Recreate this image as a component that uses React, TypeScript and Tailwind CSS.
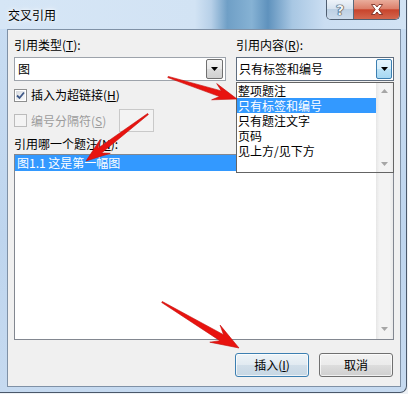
import React from "react";

function arrowPts(x1: number, y1: number, x2: number, y2: number, headLen: number, headW: number, shaftW: number) {
  const dx = x2 - x1, dy = y2 - y1;
  const L = Math.hypot(dx, dy);
  const ux = dx / L, uy = dy / L;
  const nx = -uy, ny = ux;
  const ix = x2 - ux * headLen * 0.72, iy = y2 - uy * headLen * 0.72;
  const bx = x2 - ux * headLen, by = y2 - uy * headLen;
  const pts = [
    [x1 + nx * 0.6, y1 + ny * 0.6],
    [ix + nx * shaftW / 2, iy + ny * shaftW / 2],
    [bx + nx * headW / 2, by + ny * headW / 2],
    [x2, y2],
    [bx - nx * headW / 2, by - ny * headW / 2],
    [ix - nx * shaftW / 2, iy - ny * shaftW / 2],
    [x1 - nx * 0.6, y1 - ny * 0.6],
  ];
  return pts.map((p) => p.map((v) => v.toFixed(1)).join(",")).join(" ");
}

function Tri({ color = "#000" }: { color?: string }) {
  return (
    <svg width="7" height="4" viewBox="0 0 7 4">
      <path d="M0 0 L7 0 L3.5 4 Z" fill={color} />
    </svg>
  );
}

function TriUp({ color = "#a6a6a6" }: { color?: string }) {
  return (
    <svg width="7" height="4" viewBox="0 0 7 4">
      <path d="M0 4 L7 4 L3.5 0 Z" fill={color} />
    </svg>
  );
}

export default function App() {
  return (
    <div className="relative w-[408px] h-[394px] overflow-hidden bg-[#eef2f6] font-['Noto_Sans_CJK_SC','Noto_Sans',sans-serif] text-[12px] leading-[16px] text-black">
      <div className="w-[407px] h-[393px] flex flex-col border-r border-b border-[#4a586a] rounded-br-[7px] bg-[linear-gradient(180deg,#c9ddf2_0%,#bed5ee_60%,#c6daf0_100%)]">
        {/* Title bar */}
        <div className="h-[29px] flex items-start bg-[linear-gradient(90deg,#d6e6f6_0%,#d2e3f4_48%,#b7d0e8_52%,#6f9fc6_56%,#86b2d4_62%,#5f92bd_66%,#a8c7e3_72%,#cbdef2_80%,#d2e3f4_100%)]">
          <div className="pl-[8px] pt-[7px] text-[12px] leading-[16px] text-black [text-shadow:0_0_6px_#ffffff,0_0_3px_#ffffff]">交叉引用</div>
          <div className="ml-auto mr-[6px] flex h-[20px] border border-t-0 border-[#4f5e70] rounded-b-[5px] overflow-hidden">
            <div className="w-[27px] border-r border-[#5a6a7c] bg-[linear-gradient(180deg,#eef3f9_0%,#d7e3ef_45%,#bdd0e3_50%,#cddcec_100%)] flex items-center justify-center text-[14px] leading-[14px] font-bold text-[#eef2f6] font-['DejaVu_Sans',sans-serif] [text-shadow:0_0_1px_#1e2a38,0_0_1px_#1e2a38,0_0_1px_#1e2a38]">
              ?
            </div>
            <div className="w-[45px] bg-[linear-gradient(180deg,#e9ad9c_0%,#dc806b_45%,#c8442c_52%,#d3674e_100%)] flex items-center justify-center">
              <svg width="14" height="11" viewBox="0 0 14 11">
                <path d="M1.5 0.5 L5 0.5 L7 3 L9 0.5 L12.5 0.5 L8.8 5.5 L12.5 10.5 L9 10.5 L7 8 L5 10.5 L1.5 10.5 L5.2 5.5 Z" fill="#ffffff" stroke="#6e2116" strokeWidth="0.8" />
              </svg>
            </div>
          </div>
        </div>

        {/* Client area */}
        <div className="ml-[7px] mr-[5px] h-[358px] border border-[#7f91a6] bg-[#f0f0f0] pl-[6px] pr-[6px] pt-[7px] flex flex-col">
          <div className="flex gap-[10px]">
            {/* Left column */}
            <div className="w-[212px] flex flex-col">
              <div className="h-[16px]">引用类型(<u>T</u>):</div>
              <div className="mt-[4px] h-[24px] border border-[#9da3ab] bg-white flex items-center p-[1px] pr-[2px]">
                <div className="flex-1 pl-[2px]">图</div>
                <div className="w-[17px] h-[20px] border border-[#707070] rounded-[2px] bg-[linear-gradient(180deg,#f4f4f4_0%,#e9e9e9_50%,#dcdcdc_51%,#d0d0d0_100%)] flex items-center justify-center">
                  <Tri />
                </div>
              </div>
              <div className="mt-[6px] h-[16px] flex items-center">
                <div className="w-[13px] h-[13px] border border-[#8e8f8f] bg-white p-[1px]">
                  <div className="w-full h-full bg-[linear-gradient(135deg,#d5d8dd_0%,#eef0f2_60%,#f8f8f8_100%)] flex items-center justify-center">
                    <svg width="9" height="9" viewBox="0 0 9 9">
                      <path d="M1 4.5 L3.5 7 L8 1.5" fill="none" stroke="#3e5887" strokeWidth="1.8" />
                    </svg>
                  </div>
                </div>
                <div className="ml-[4px]">插入为超链接(<u>H</u>)</div>
              </div>
              <div className="mt-[6px] h-[23px] flex items-center">
                <div className="w-[13px] h-[13px] border border-[#bcbcbc] bg-[#f4f4f4]" />
                <div className="ml-[4px] w-[88px] text-[#9c9c9c]">编号分隔符(<u>S</u>)</div>
                <div className="w-[35px] h-[23px] border border-[#c9c9c9] bg-[#f3f3f3]" />
              </div>
            </div>

            {/* Right column */}
            <div className="w-[158px] flex flex-col relative">
              <div className="h-[16px]">引用内容(<u>R</u>):</div>
              <div className="mt-[4px] h-[24px] border border-[#5f6d7e] bg-white flex items-center p-[1px]">
                <div className="flex-1 pl-[1px]">只有标签和编号</div>
                <div className="w-[16px] h-[20px] border border-[#3c7fb1] rounded-[2px] bg-[linear-gradient(180deg,#e8f5fc_0%,#d6eefb_50%,#bde3f7_51%,#a7d8f3_100%)] flex items-center justify-center">
                  <Tri />
                </div>
              </div>
              {/* open dropdown list */}
              <div className="absolute left-0 top-[45px] w-[158px] h-[91px] border border-[#646464] bg-white flex z-10">
                <div className="flex-1 flex flex-col">
                  <div className="h-[15px] leading-[15px] pl-[1px]">整项题注</div>
                  <div className="h-[15px] leading-[15px] pl-[1px] bg-[#3399ff] text-white">只有标签和编号</div>
                  <div className="h-[15px] leading-[15px] pl-[1px]">只有题注文字</div>
                  <div className="h-[15px] leading-[15px] pl-[1px]">页码</div>
                  <div className="h-[15px] leading-[15px] pl-[1px]">见上方/见下方</div>
                </div>
                <div className="w-[17px] flex flex-col items-center justify-between py-[6px] bg-[linear-gradient(90deg,#e6e6e6_0%,#f3f3f3_20%,#f3f3f3_80%,#e9e9e9_100%)]">
                  <TriUp />
                  <Tri color="#a6a6a6" />
                </div>
              </div>
            </div>
          </div>

          <div className="mt-[4px] h-[16px]">引用哪一个题注(<u>N</u>):</div>
          <div className="mt-[2px] h-[186px] border border-[#828790] bg-white flex">
            <div className="flex-1 flex flex-col">
              <div className="h-[16px] bg-[#3399ff] text-white pl-[2px]">图1.1 这是第一幅图</div>
            </div>
            <div className="w-[17px] flex flex-col items-center justify-between pt-[6px] pb-[8px] bg-[linear-gradient(90deg,#e6e6e6_0%,#f3f3f3_20%,#f3f3f3_80%,#e9e9e9_100%)]">
              <TriUp />
              <Tri color="#a6a6a6" />
            </div>
          </div>

          <div className="mt-[13px] flex justify-end gap-[10px] mr-[1px]">
            <div className="w-[74px] h-[24px] rounded-[3px] border border-[#3c7fb1] bg-[linear-gradient(180deg,#eef4f8_0%,#e1eaf1_50%,#d1dee9_51%,#c6d7e4_100%)] shadow-[inset_0_0_0_1px_rgba(255,255,255,0.7)] flex items-center justify-center">
              插入(<u>I</u>)
            </div>
            <div className="w-[74px] h-[24px] rounded-[3px] border border-[#707070] bg-[linear-gradient(180deg,#f2f2f2_0%,#ebebeb_50%,#dddddd_51%,#cfcfcf_100%)] shadow-[inset_0_0_0_1px_rgba(255,255,255,0.7)] flex items-center justify-center">
              取消
            </div>
          </div>
        </div>
      </div>

      {/* Annotation arrows */}
      <svg className="absolute left-0 top-0 pointer-events-none z-20" width="408" height="394" viewBox="0 0 408 394">
        <polygon points={arrowPts(168, 77, 237, 99, 24, 17, 6)} fill="#e8130f" stroke="#c50b08" strokeWidth="0.6" />
        <polygon points={arrowPts(148, 114, 86, 161, 24, 17, 6)} fill="#e8130f" stroke="#c50b08" strokeWidth="0.6" />
        <polygon points={arrowPts(162, 302, 239, 348, 28, 20, 7)} fill="#e8130f" stroke="#c50b08" strokeWidth="0.6" />
      </svg>
    </div>
  );
}
